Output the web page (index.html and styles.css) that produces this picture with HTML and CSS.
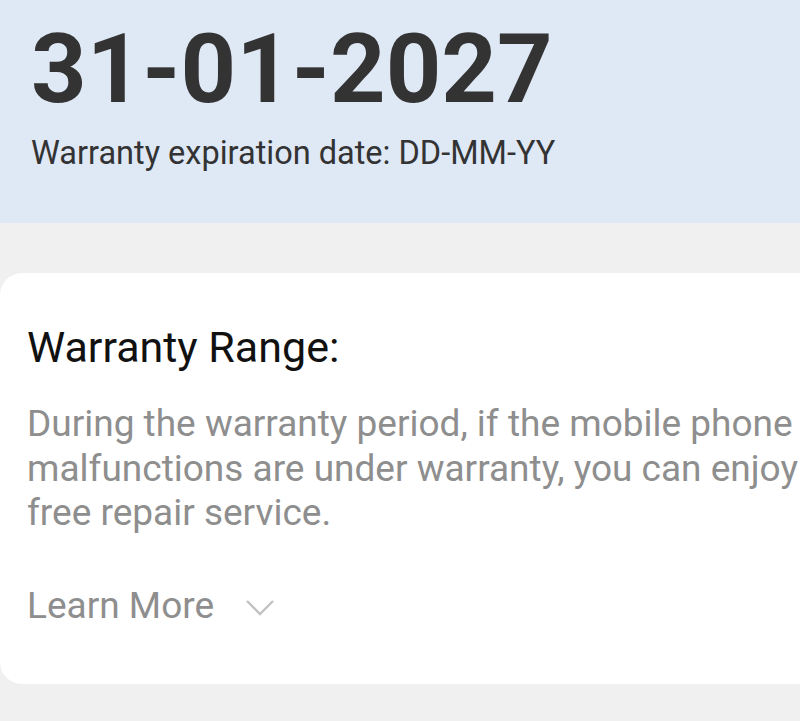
FILE: index.html
```html
<!DOCTYPE html>
<html lang="en">
<head>
    <meta charset="UTF-8">
    <meta name="viewport" content="width=device-width, initial-scale=1.0">
    <title>Warranty</title>
    <link rel="stylesheet" href="styles.css">
</head>
<body>
    <header class="expiry">
        <div class="expiry-date">31-01-2027</div>
        <div class="expiry-label">Warranty expiration date: DD-MM-YY</div>
    </header>

    <section class="card">
        <h2 class="card-title">Warranty Range:</h2>
        <p class="card-text">During the warranty period, if the mobile phone malfunctions are under warranty, you can enjoy free repair service.</p>
        <div class="learn-more">
            <span>Learn More</span>
            <svg class="chevron" width="30" height="18" viewBox="0 0 30 18">
                <path d="M2 2 L15 15 L28 2" fill="none" stroke="#c2c2c2" stroke-width="2.4"/>
            </svg>
        </div>
    </section>
</body>
</html>
```

FILE: styles.css
```css
body {
    font-family: 'Roboto', sans-serif;
    background-color: #f0f0f0;
    margin: 0;
    overflow: hidden;
}

.expiry {
    background-color: #dfe8f5;
    height: 223px;
    padding: 21px 0 0 31px;
    box-sizing: border-box;
}

.expiry-date {
    font-size: 97px;
    font-weight: 700;
    color: #333;
    line-height: 97px;
}

.expiry-label {
    font-size: 32.5px;
    line-height: 40px;
    color: #333;
    margin-top: 15px;
}

.card {
    background-color: #fff;
    margin-top: 50px;
    width: 900px;
    height: 411px;
    border-radius: 22px 0 0 22px;
    padding: 49px 0 0 27px;
    box-sizing: border-box;
}

.card-title {
    font-size: 43px;
    line-height: 50px;
    font-weight: 400;
    color: #111;
    margin: 0;
}

.card-text {
    font-size: 37px;
    line-height: 44.5px;
    color: #8e8e8e;
    margin: 30px 0 0;
    width: 820px;
}

.learn-more {
    display: flex;
    align-items: center;
    gap: 31px;
    font-size: 37px;
    line-height: 44.5px;
    color: #8e8e8e;
    margin-top: 48px;
}

.chevron {
    margin-top: 5px;
}
```
